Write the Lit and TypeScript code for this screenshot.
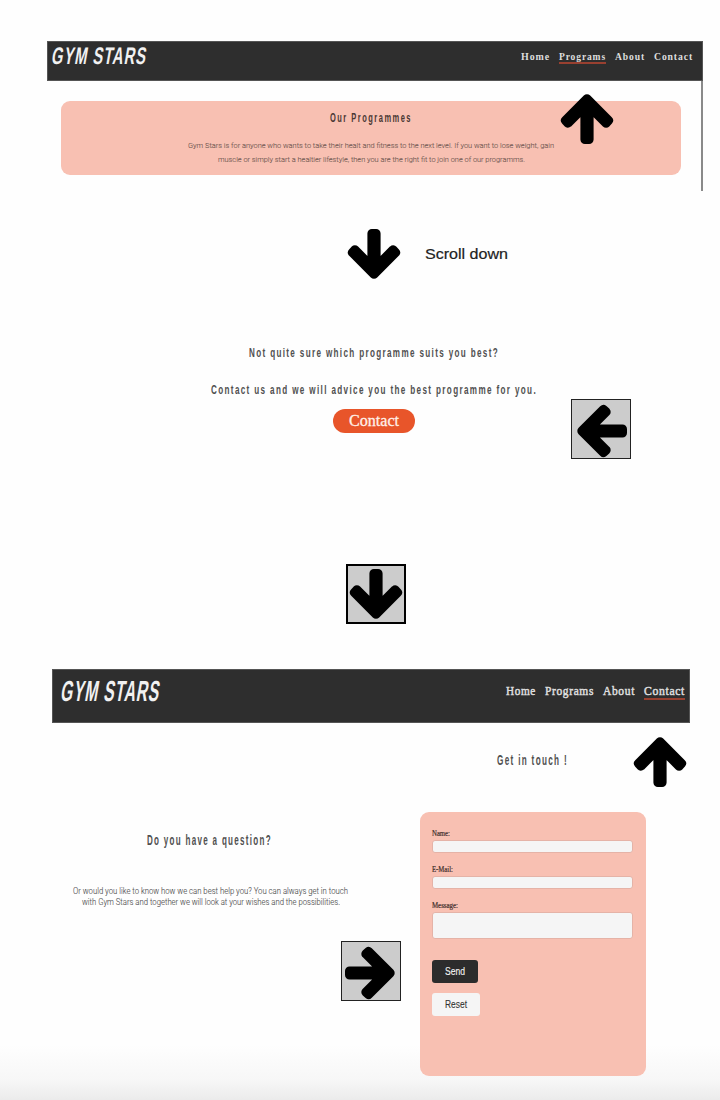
import { LitElement, html, svg, css } from "lit";
import { customElement, property } from "lit/decorators.js";

@customElement("fit-text")
class FitText extends LitElement {
  @property() text = "";
  @property({ type: Number }) width = 100;
  @property({ type: Number }) height = 16;
  @property({ type: Number }) base = 12;

  static styles = css`
    :host { display: block; flex: none; }
    .line { display: block; overflow: visible; }
    .glyphs { fill: currentColor; stroke: currentColor; stroke-width: var(--ink, 0); }
  `;

  render() {
    return html`<svg class="line" width=${this.width} height=${this.height}>
      ${svg`<text class="glyphs" x="0" y=${this.base} textLength=${this.width} lengthAdjust="spacingAndGlyphs">${this.text}</text>`}
    </svg>`;
  }
}

@customElement("arrow-mark")
class ArrowMark extends LitElement {
  @property({ reflect: true }) dir = "up";

  static styles = css`
    :host { display: block; flex: none; width: 52px; height: 50px; }
    .arrow { display: block; width: 52px; height: 50px; overflow: visible; }
    .shape { fill: #000; stroke: #000; stroke-width: 9; stroke-linejoin: round; }
    :host([dir="down"]) .arrow { transform: rotate(180deg); }
    :host([dir="left"]) .arrow { transform: rotate(-90deg); }
    :host([dir="right"]) .arrow { transform: rotate(90deg); }
  `;

  render() {
    return html`<svg class="arrow" viewBox="0 0 52 50">
      <path class="shape" d="M26 4.8 L4.4 26.4 L6.9 29.2 L23.9 12.2 V45.5 H28.1 V12.2 L45.1 29.2 L47.6 26.4 Z" />
    </svg>`;
  }
}

@customElement("app-root")
class AppRoot extends LitElement {
  static styles = css`
    * { box-sizing: border-box; }
    :host {
      display: block; width: 720px; height: 1100px; overflow: hidden;
      background: linear-gradient(#fefefe 0, #fefefe 1045px, #f7f7f7 1080px, #ebebeb 1100px);
      color: #333; font-family: "Liberation Sans", sans-serif;
    }
    .frame { position: relative; margin: 0 17px 0 47px; padding-top: 41px; height: 191px; }
    .bar { display: flex; justify-content: space-between; background: #2e2e2e; color: #f1f1f1; border: 1px solid #555; }
    .bar.one { height: 40px; padding: 4px 9px 0 3px; }
    .bar.two { height: 54px; margin: 0 30px 0 52px; padding: 7px 4px 0 7px; }
    .logo { font: bold 24px "Liberation Sans Narrow", "Liberation Sans", sans-serif; letter-spacing: 1.5px; transform: skewX(-10deg); }
    .two .logo { font-size: 29px; }
    .nav { display: flex; gap: 9px; font: bold 11px "Liberation Serif", serif; letter-spacing: 1px; color: #dedede; }
    .one .nav { padding-top: 5px; }
    .two .nav { padding-top: 7px; font-size: 12.5px; font-weight: normal; letter-spacing: .7px; --ink: .5px; }
    .on { border-bottom: 2px solid #994030; }
    .one .on { height: 13px; }
    .two .on { height: 16px; }
    .body { height: 110px; padding: 20px 20px 0 14px; border-right: 2px solid #8a8a8a; }
    .card { height: 74px; border-radius: 9px; background: #f8c0b2; display: flex; flex-direction: column; align-items: center; }
    .head { font: bold 12.5px "Liberation Sans Narrow", "Liberation Sans", sans-serif; letter-spacing: 2.5px; color: #505050; }
    .card .head { margin-top: 9px; color: #4a3834; }
    .copy { font: 300 8px Roboto, sans-serif; color: #6f5751; --ink: .1px; }
    .first { margin-top: 14px; }
    .over { position: absolute; left: 514px; top: 94px; }
    .scroll { display: flex; gap: 25px; margin: 38px 0 0 348px; color: #222; font-size: 15px; --ink: .2px; }
    .scroll fit-text { padding-top: 15px; }
    .ask { display: flex; justify-content: space-between; margin: 65px 89px 0 211px; height: 115px; }
    .askcol { display: flex; flex-direction: column; align-items: center; }
    .ask .head { font-size: 12px; letter-spacing: 2px; }
    .pill { display: flex; justify-content: center; width: 82px; height: 24px; margin-top: 9px; padding-top: 3px; border-radius: 12px; background: #e8552a; color: #fff0e8; font: 16px "Liberation Serif", serif; --ink: .3px; }
    .box { display: flex; width: 60px; height: 60px; background: #ccc; border: 1px solid #222; }
    .box.left { margin-top: 55px; padding: 6px 0 0 4px; }
    .box.down { border: 2px solid #000; margin: 105px 0 45px 346px; padding: 3px 0 0 2px; }
    .box.right { margin: 34px 0 0 289px; padding: 6px 0 0 2px; }
    .contact { display: flex; margin-left: 52px; height: 377px; }
    .colL { width: 368px; padding-top: 107px; }
    .colL .head { margin-left: 95px; font-size: 15.5px; }
    .note { margin-left: 21px; padding-top: 37px; display: flex; flex-direction: column; align-items: center; width: 275px; }
    .note .copy { color: #555; font-size: 9px; }
    .colR { width: 268px; }
    .touch { display: flex; justify-content: space-between; height: 89px; padding: 14px 2px 0 77px; }
    .touch .head { font-size: 15.5px; padding-top: 13px; }
    .form { width: 226px; height: 264px; border-radius: 9px; background: #f8c0b2; padding: 16px 13px 0 12px; }
    .label { font: 8px "Liberation Serif", serif; color: #3c2c29; --ink: .2px; }
    .field { height: 13px; margin: 0 0 11px; background: #f5f5f5; border: 1px solid #e5b3a7; border-radius: 3px; }
    .field.area { height: 27px; margin-bottom: 21px; }
    .btn { display: flex; padding: 4px 0 0 13px; border-radius: 3px; height: 23px; font-size: 10px; --ink: .1px; }
    .send { width: 46px; background: #2c2c2c; color: #f5f5f5; margin-bottom: 10px; }
    .reset { width: 48px; background: #f5f5f5; color: #333; }
  `;

  private line(text: string, width: number, height: number, base: number, cls = "") {
    return html`<fit-text class=${cls} .text=${text} .width=${width} .height=${height} .base=${base}></fit-text>`;
  }

  private nav(widths: number[], base: number, active: number) {
    return html`<nav class="nav">
      ${["Home", "Programs", "About", "Contact"].map((t, i) => this.line(t, widths[i], 14, base, i === active ? "on" : ""))}
    </nav>`;
  }

  render() {
    return html`
      <section class="frame">
        <header class="bar one">${this.line("GYM STARS", 95, 24, 18, "logo")}${this.nav([29, 47, 30, 39], 9, 1)}</header>
        <div class="body">
          <div class="card">
            ${this.line("Our Programmes", 82, 16, 11.5, "head")}
            ${this.line("Gym Stars is for anyone who wants to take their healt and fitness to the next level. If you want to lose weight, gain", 366, 14, 7.5, "copy first")}
            ${this.line("muscle or simply start a healtier lifestyle, then you are the right fit to join one of our programms.", 307, 14, 7.5, "copy")}
          </div>
        </div>
        <arrow-mark class="over" dir="up"></arrow-mark>
      </section>
      <section class="scroll">
        <arrow-mark dir="down"></arrow-mark>${this.line("Scroll down", 83, 20, 15)}
      </section>
      <section class="ask">
        <div class="askcol">
          ${this.line("Not quite sure which programme suits you best?", 250, 38, 12.5, "head")}
          ${this.line("Contact us and we will advice you the best programme for you.", 326, 18, 12, "head")}
          <div class="pill">${this.line("Contact", 50, 18, 14)}</div>
        </div>
        <div class="box left"><arrow-mark dir="left"></arrow-mark></div>
      </section>
      <div class="box down"><arrow-mark dir="down"></arrow-mark></div>
      <header class="bar two">${this.line("GYM STARS", 99, 30, 23.5, "logo")}${this.nav([30, 49, 32, 41], 11, 3)}</header>
      <section class="contact">
        <div class="colL">
          ${this.line("Do you have a question?", 125, 18, 14.5, "head")}
          <div class="note">
            ${this.line("Or would you like to know how we can best help you? You can always get in touch", 275, 11, 9, "copy")}
            ${this.line("with Gym Stars and together we will look at your wishes and the possibilities.", 258, 11, 9, "copy")}
          </div>
          <div class="box right"><arrow-mark dir="right"></arrow-mark></div>
        </div>
        <div class="colR">
          <div class="touch">${this.line("Get in touch !", 71, 20, 15, "head")}<arrow-mark dir="up"></arrow-mark></div>
          <div class="form">
            ${this.line("Name:", 18, 12, 8, "label")}<div class="field"></div>
            ${this.line("E-Mail:", 21, 12, 8, "label")}<div class="field"></div>
            ${this.line("Message:", 26, 12, 8, "label")}<div class="field area"></div>
            <div class="btn send">${this.line("Send", 20, 16, 11)}</div>
            <div class="btn reset">${this.line("Reset", 22, 16, 11)}</div>
          </div>
        </div>
      </section>`;
  }
}
